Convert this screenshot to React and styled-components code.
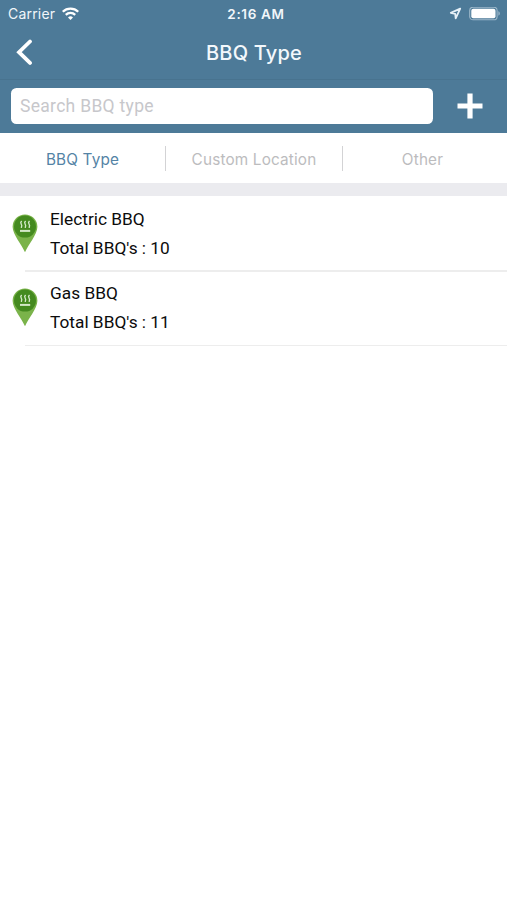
import React, { useState } from 'react';
import styled, { createGlobalStyle } from 'styled-components';

const GlobalStyle = createGlobalStyle`
  * {
    box-sizing: border-box;
  }
  body {
    margin: 0;
    background: #fff;
    font-family: Inter, "Liberation Sans", sans-serif;
  }
`;

const Screen = styled.div`
  display: flex;
  flex-direction: column;
  height: 900px;
  background: #fff;
`;

const StatusBar = styled.div`
  display: grid;
  grid-template-columns: 1fr auto 1fr;
  align-items: center;
  height: 27px;
  padding: 0 6px 0 8px;
  background: #4d7a98;
  color: #f1f6fa;
`;

const StatusSide = styled.div`
  display: flex;
  align-items: center;
  justify-content: ${props => (props.$end ? 'flex-end' : 'flex-start')};
  gap: ${props => (props.$end ? '7px' : '6px')};
`;

const Carrier = styled.span`
  font-size: 14px;
  letter-spacing: 0.2px;
`;

const Clock = styled.span`
  padding-left: 3px;
  font-weight: 600;
  font-size: 13.5px;
  letter-spacing: 0.65px;
`;

const NavBar = styled.header`
  display: grid;
  grid-template-columns: 60px 1fr 60px;
  align-items: center;
  height: 53px;
  background: #4d7a98;
  border-bottom: 1px solid #48738f;
`;

const IconButton = styled.button`
  display: flex;
  padding: 0;
  border: 0;
  background: none;
  cursor: pointer;
`;

const BackButton = styled(IconButton)`
  padding: 0 0 2px 15px;
`;

const Title = styled.h1`
  margin: 0;
  padding-left: 1px;
  text-align: center;
  color: #f3f8fc;
  font-size: 20px;
  line-height: 26px;
  font-weight: 500;
  letter-spacing: 0.2px;
`;

const SearchBar = styled.div`
  display: flex;
  align-items: center;
  gap: 24px;
  height: 53px;
  padding: 0 24px 1px 11px;
  background: #4d7a98;
`;

const SearchInput = styled.input`
  flex: 1;
  min-width: 0;
  height: 36px;
  padding: 0 9px;
  border: 0;
  border-radius: 5.5px;
  outline: none;
  background: #fff;
  font-family: Roboto, sans-serif;
  font-size: 17.5px;
  letter-spacing: 0.3px;
  &::placeholder {
    color: #c7c7cb;
    opacity: 1;
  }
`;

const Tabs = styled.nav`
  display: grid;
  grid-template-columns: 166px 177px 1fr;
  align-items: center;
  height: 50px;
`;

const Tab = styled.button`
  height: 25px;
  padding: ${props => (props.$last ? '2px 5px 0 0' : '2px 0 0')};
  border: 0;
  border-right: ${props => (props.$last ? '0' : '1px solid #d3d3d5')};
  background: none;
  color: ${props => (props.$active ? '#5483a5' : '#bcbcbe')};
  font-family: inherit;
  font-size: 15.3px;
  letter-spacing: 0.17px;
  cursor: pointer;
`;

const Band = styled.div`
  height: 13px;
  background: #ebebef;
`;

const List = styled.ul`
  margin: 0;
  padding: 1px 0 0;
  list-style: none;
`;

const Row = styled.li`
  display: grid;
  grid-template-columns: 50px 1fr;
  grid-template-rows: 1fr 1.5px;
  align-items: center;
  height: 74.5px;
`;

const PinCell = styled.div`
  display: flex;
  justify-content: center;
  padding-bottom: 1px;
`;

const RowText = styled.div`
  color: #0c0c0c;
  font-family: Roboto, sans-serif;
  font-size: 17.3px;
  line-height: 29px;
  letter-spacing: 0;
`;

const RowLine = styled.div`
  grid-column: 1 / -1;
  height: 1.5px;
  margin-left: 25px;
  background: #ededed;
`;

const WifiIcon = () => (
  <svg width="19" height="14" viewBox="0 0 19 14" fill="none" stroke="#fff" strokeWidth="2.3">
    <path d="M1.8 4.8a11 11 0 0 1 15.4 0" />
    <path d="M4.8 7.9a6.7 6.7 0 0 1 9.4 0" />
    <path d="M9.5 12.9 7 10.4a3.6 3.6 0 0 1 5 0z" fill="#fff" stroke="none" />
  </svg>
);

const LocationIcon = () => (
  <svg width="13" height="13" viewBox="0 0 13 13" fill="none" stroke="#e6f0f7" strokeWidth="1.8" strokeLinejoin="round">
    <path d="M11.2 1.6 1.8 5.9l4.4.9.5 4.6z" />
  </svg>
);

const BatteryIcon = () => (
  <svg width="32" height="14" viewBox="0 0 32 14">
    <rect x=".7" y=".2" width="27.4" height="12.6" rx="3.4" fill="none" stroke="#9db8ca" strokeWidth="1.1" />
    <rect x="2.3" y="1.8" width="24.2" height="9.4" rx="2" fill="#fff" />
    <path d="M29.4 4.3c1.9.7 1.9 3.7 0 4.4z" fill="#9db8ca" />
  </svg>
);

const BackIcon = () => (
  <svg width="18" height="27" viewBox="0 0 18 27" fill="none" stroke="#fff" strokeWidth="3.8" strokeLinecap="round">
    <path d="M15 2.5 4 13.2l11 10.7" />
  </svg>
);

const PlusIcon = () => (
  <svg width="26" height="26" viewBox="0 0 26 26" stroke="#fff" strokeWidth="5.2">
    <path d="M13 .5v25M.5 13h25" />
  </svg>
);

// map pin with a hot plate: three wisps of steam over a bar
const PinIcon = () => (
  <svg width="26" height="39" viewBox="0 0 26 39">
    <path d="M13 38.3C10 31 .6 20.5.6 12.8a12.4 12.4 0 0 1 24.8 0C25.4 20.5 16 31 13 38.3z" fill="#7ab34a" />
    <circle cx="13" cy="12.6" r="11" fill="#448a1f" />
    <g fill="none" stroke="#d3e8c8" strokeWidth="1.4" strokeLinecap="round">
      <path d="M9.4 7.400c-2.200 1.400 1.300 3.200.2 5.100l-.2.8" />
      <path d="M13.3 7.400c-2.200 1.400 1.300 3.200.2 5.100l-.2.8" />
      <path d="M17.200 7.400c-2.200 1.400 1.300 3.200.2 5.100l-.2.8" />
    </g>
    <path d="M8 16.900h10.200" stroke="#d3e8c8" strokeWidth="2" />
  </svg>
);

const bbqTypes = [
  { name: 'Electric BBQ', total: 10 },
  { name: 'Gas BBQ', total: 11 },
];

const tabs = ['BBQ Type', 'Custom Location', 'Other'];

const App = () => {
  const [active, setActive] = useState(0);
  const [search, setSearch] = useState('');

  return (
    <Screen>
      <GlobalStyle />
      <StatusBar>
        <StatusSide>
          <Carrier>Carrier</Carrier>
          <WifiIcon />
        </StatusSide>
        <Clock>2:16 AM</Clock>
        <StatusSide $end>
          <LocationIcon />
          <BatteryIcon />
        </StatusSide>
      </StatusBar>
      <NavBar>
        <BackButton aria-label="Back"><BackIcon /></BackButton>
        <Title>BBQ Type</Title>
      </NavBar>
      <SearchBar>
        <SearchInput
          placeholder="Search BBQ type"
          value={search}
          onChange={e => setSearch(e.target.value)}
        />
        <IconButton aria-label="Add"><PlusIcon /></IconButton>
      </SearchBar>
      <Tabs>
        {tabs.map((tab, i) => (
          <Tab
            key={tab}
            $active={i === active}
            $last={i === tabs.length - 1}
            onClick={() => setActive(i)}
          >
            {tab}
          </Tab>
        ))}
      </Tabs>
      <Band />
      <List>
        {bbqTypes
          .filter(item => item.name.toLowerCase().includes(search.toLowerCase()))
          .map(item => (
            <Row key={item.name}>
              <PinCell><PinIcon /></PinCell>
              <RowText>
                <div>{item.name}</div>
                <div>Total BBQ's : {item.total}</div>
              </RowText>
              <RowLine />
            </Row>
          ))}
      </List>
    </Screen>
  );
};

export default App;
